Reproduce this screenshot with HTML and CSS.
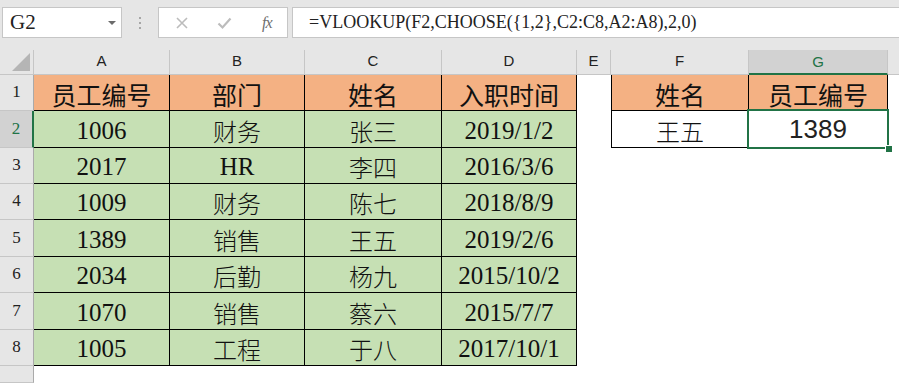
FILE: index.html
```html
<!DOCTYPE html>
<html>
<head>
<meta charset="UTF-8">
<title>VLOOKUP CHOOSE</title>
<link rel="stylesheet" href="styles.css">
</head>
<body>
	<div id="barre">
		<div class="nom_cellule">
			<span>G2</span>
			<span class="fleche"></span>
		</div>
		<div class="points"><i></i><i></i><i></i></div>
		<div class="boutons">
			<svg width="14" height="14" viewBox="0 0 14 14"><path d="M2 2 L12 12 M12 2 L2 12" stroke="#bcbcbc" stroke-width="1.6" fill="none"/></svg>
			<svg width="15" height="14" viewBox="0 0 15 14"><path d="M1.5 7.5 L5.5 11.5 L13.5 2.5" stroke="#bcbcbc" stroke-width="2.2" fill="none"/></svg>
			<span class="fx">fx</span>
		</div>
		<div class="formule">=VLOOKUP(F2,CHOOSE({1,2},C2:C8,A2:A8),2,0)</div>
	</div>

	<div id="feuille">
		<div class="coin"></div>
		<div class="entete_col">A</div>
		<div class="entete_col">B</div>
		<div class="entete_col">C</div>
		<div class="entete_col">D</div>
		<div class="entete_col">E</div>
		<div class="entete_col">F</div>
		<div class="entete_col actif">G</div>
		<div class="entete_col fin"></div>

		<div class="entete_lig">1</div>
		<div class="cel t orange zh">员工编号</div>
		<div class="cel t orange zh">部门</div>
		<div class="cel t orange zh">姓名</div>
		<div class="cel t orange zh">入职时间</div>
		<div class="cel"></div>
		<div class="cel t gauche orange zh">姓名</div>
		<div class="cel t orange zh">员工编号</div>
		<div class="cel"></div>

		<div class="entete_lig actif">2</div>
		<div class="cel t vert nb">1006</div>
		<div class="cel t vert zd">财务</div>
		<div class="cel t vert zd">张三</div>
		<div class="cel t vert nb">2019/1/2</div>
		<div class="cel"></div>
		<div class="cel t gauche zd">王五</div>
		<div class="cel t resultat">1389<span class="selection"><i></i></span></div>
		<div class="cel"></div>

		<div class="entete_lig">3</div>
		<div class="cel t vert nb">2017</div>
		<div class="cel t vert nb">HR</div>
		<div class="cel t vert zd">李四</div>
		<div class="cel t vert nb">2016/3/6</div>
		<div class="cel"></div><div class="cel"></div><div class="cel"></div><div class="cel"></div>

		<div class="entete_lig">4</div>
		<div class="cel t vert nb">1009</div>
		<div class="cel t vert zd">财务</div>
		<div class="cel t vert zd">陈七</div>
		<div class="cel t vert nb">2018/8/9</div>
		<div class="cel"></div><div class="cel"></div><div class="cel"></div><div class="cel"></div>

		<div class="entete_lig">5</div>
		<div class="cel t vert nb">1389</div>
		<div class="cel t vert zd">销售</div>
		<div class="cel t vert zd">王五</div>
		<div class="cel t vert nb">2019/2/6</div>
		<div class="cel"></div><div class="cel"></div><div class="cel"></div><div class="cel"></div>

		<div class="entete_lig">6</div>
		<div class="cel t vert nb">2034</div>
		<div class="cel t vert zd">后勤</div>
		<div class="cel t vert zd">杨九</div>
		<div class="cel t vert nb">2015/10/2</div>
		<div class="cel"></div><div class="cel"></div><div class="cel"></div><div class="cel"></div>

		<div class="entete_lig">7</div>
		<div class="cel t vert nb">1070</div>
		<div class="cel t vert zd">销售</div>
		<div class="cel t vert zd">蔡六</div>
		<div class="cel t vert nb">2015/7/7</div>
		<div class="cel"></div><div class="cel"></div><div class="cel"></div><div class="cel"></div>

		<div class="entete_lig">8</div>
		<div class="cel t vert nb">1005</div>
		<div class="cel t vert zd">工程</div>
		<div class="cel t vert zd">于八</div>
		<div class="cel t vert nb">2017/10/1</div>
		<div class="cel"></div><div class="cel"></div><div class="cel"></div><div class="cel"></div>

		<div class="entete_lig"></div>
	</div>
</body>
</html>
```

FILE: styles.css
```css
html, body
{
	margin : 0;
	padding : 0;
	width : 899px;
	height : 383px;
	overflow : hidden;
	background : #fff;
}

body
{
	font-family : "Liberation Serif", "Noto Sans CJK SC", serif;
}

/* barre de formule */

#barre
{
	height : 50px;
	background : #e6e6e6;
	display : flex;
	align-items : flex-start;
	padding-top : 7px;
	padding-left : 2px;
	box-sizing : border-box;
}

.nom_cellule
{
	width : 120px;
	height : 31px;
	box-sizing : border-box;
	background : #fff;
	border : 1px solid #c6c6c6;
	display : flex;
	align-items : center;
	justify-content : space-between;
	padding : 0 5px 0 7px;
	font-size : 21px;
	color : #222;
}

.fleche
{
	width : 0;
	height : 0;
	border-left : 4px solid transparent;
	border-right : 4px solid transparent;
	border-top : 4px solid #6b6b6b;
}

.points
{
	width : 36px;
	height : 31px;
	display : flex;
	flex-direction : column;
	align-items : center;
	justify-content : center;
	gap : 3px;
}

.points i
{
	display : block;
	width : 2px;
	height : 2px;
	background : #a6a6a6;
}

.boutons
{
	width : 130px;
	height : 31px;
	box-sizing : border-box;
	background : #fff;
	border : 1px solid #c6c6c6;
	display : flex;
	align-items : center;
	gap : 28px;
	padding-left : 16px;
}

.fx
{
	font-style : italic;
	font-size : 16px;
	color : #6e6e6e;
	letter-spacing : -1px;
	margin-left : 2px;
}

.formule
{
	flex : 1;
	margin-left : 4px;
	height : 31px;
	box-sizing : border-box;
	background : #fff;
	border : 1px solid #c6c6c6;
	border-right : none;
	padding-left : 16px;
	line-height : 29px;
	font-size : 18px;
	color : #222;
	white-space : nowrap;
}

/* feuille */

#feuille
{
	display : grid;
	grid-template-columns : 34px 136px 135px 137px 135px 34px 138px 139px 11px;
	grid-template-rows : 25px 36px 37px 36px 36px 37px 36px 37px 36px 17px;
}

.coin
{
	background : #e6e6e6;
	border-right : 1px solid #c6c6c6;
	border-bottom : 1px solid #c6c6c6;
	box-sizing : border-box;
	position : relative;
}

.coin::after
{
	content : "";
	position : absolute;
	right : 3px;
	bottom : 3px;
	width : 0;
	height : 0;
	border-left : 18px solid transparent;
	border-bottom : 18px solid #b5b5b5;
}

.entete_col
{
	background : #e6e6e6;
	border-right : 1px solid #c6c6c6;
	border-bottom : 1px solid #c6c6c6;
	box-sizing : border-box;
	display : flex;
	align-items : center;
	justify-content : center;
	padding-bottom : 3px;
	font-family : "Liberation Sans", sans-serif;
	font-size : 15px;
	color : #222;
}

.entete_col.fin
{
	border-right : none;
}

.entete_col.actif
{
	background : #d2d2d2;
	color : #217346;
	border-bottom : 2px solid #217346;
	padding-bottom : 1px;
}

.entete_lig
{
	background : #e6e6e6;
	border-right : 1px solid #aaaaaa;
	border-bottom : 1px solid #c6c6c6;
	box-sizing : border-box;
	display : flex;
	align-items : flex-end;
	justify-content : center;
	padding-bottom : 8px;
	font-size : 17px;
	color : #222;
}

.entete_lig.actif
{
	background : #d2d2d2;
	color : #217346;
	border-right : 2px solid #217346;
}

.cel
{
	box-sizing : border-box;
	display : flex;
	align-items : flex-end;
	justify-content : center;
	padding-bottom : 4px;
	color : #111;
	white-space : nowrap;
}

.t
{
	border-right : 1px solid #000;
	border-bottom : 1px solid #000;
}

.gauche
{
	border-left : 1px solid #000;
}

.orange
{
	background : #f4b183;
}

.vert
{
	background : #c6e0b4;
}

.zh
{
	font-family : "Noto Sans CJK SC", sans-serif;
	font-size : 25px;
	line-height : 30px;
	padding-bottom : 1px;
}

.zd
{
	font-family : "Noto Sans CJK SC", sans-serif;
	font-weight : 300;
	font-size : 24px;
	line-height : 30px;
	padding-bottom : 1px;
}

.nb
{
	font-size : 25px;
	line-height : 30px;
	padding-bottom : 1px;
}

.resultat
{
	position : relative;
	font-family : "Liberation Sans", sans-serif;
	font-size : 26px;
	line-height : 30px;
	padding-bottom : 3px;
	color : #222;
}

.selection
{
	position : absolute;
	left : -2px;
	top : -2px;
	right : -2px;
	bottom : -2px;
	border : 2px solid #217346;
}

.selection i
{
	position : absolute;
	right : -5px;
	bottom : -5px;
	width : 6px;
	height : 6px;
	background : #217346;
	border : 1px solid #fff;
	border-right : none;
	border-bottom : none;
}
```
